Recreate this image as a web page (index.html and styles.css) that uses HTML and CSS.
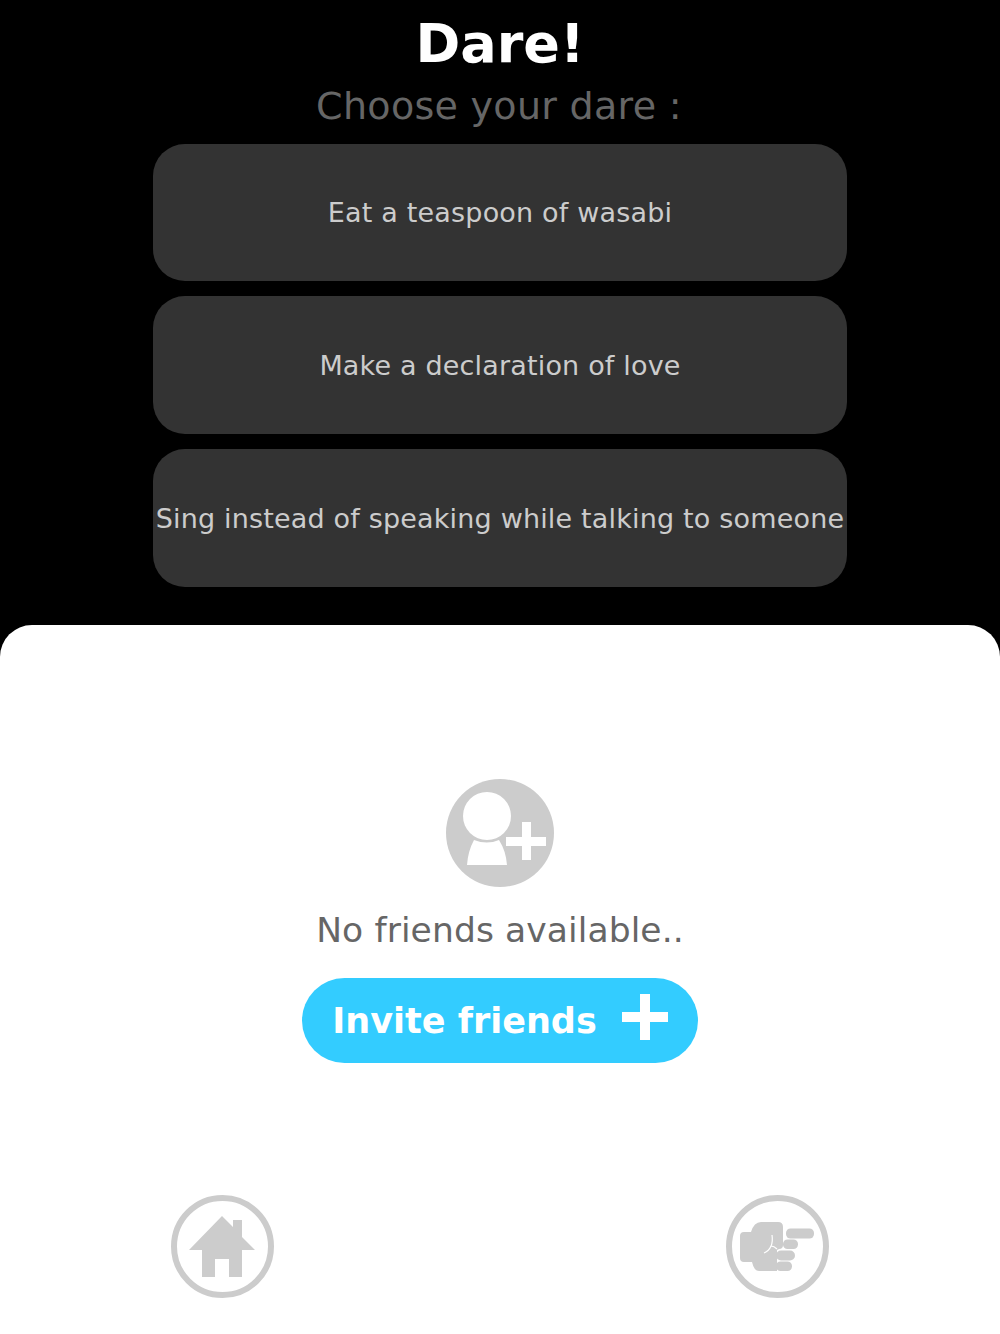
FILE: index.html
```html
<!DOCTYPE html>
<html lang="en">
<head>
<meta charset="UTF-8">
<meta name="viewport" content="width=device-width, initial-scale=1.0">
<title>Dare!</title>
<link rel="stylesheet" href="styles.css">
</head>
<body>

<section class="top">
    <h1>Dare!</h1>
    <p class="subtitle">Choose your dare :</p>
    <ul class="dares">
        <li>Eat a teaspoon of wasabi</li>
        <li>Make a declaration of love</li>
        <li>Sing instead of speaking while talking to someone</li>
    </ul>
</section>

<section class="sheet">
    <div class="friends">
        <svg class="add-icon" viewBox="0 0 108 108">
            <circle cx="54" cy="54" r="54" fill="#cccccc"/>
            <circle cx="41" cy="37" r="24" fill="#fff"/>
            <path d="M28 61 Q41 66 53 61 Q60 72 61 86 H21 Q22 72 28 61 Z" fill="#fff"/>
            <path d="M60 58 H76 V43 H85 V58 H100 V67 H85 V81 H76 V67 H60 Z" fill="#fff"/>
        </svg>
        <p class="empty">No friends available..</p>
        <button class="invite">
            <span>Invite friends</span>
            <svg class="plus" viewBox="0 0 46 46"><path d="M0 18 H18 V0 H28 V18 H46 V28 H28 V46 H18 V28 H0 Z" fill="#fff"/></svg>
        </button>
    </div>
    <nav class="bottom-nav">
        <a class="nav-btn" href="#">
            <svg viewBox="1 1 91 91">
                <path d="M46 16 L57 27 V20 H66 V37 L79 50 H66 V77 H53 V59 H39 V77 H26 V50 H13 Z" fill="#cccccc"/>
            </svg>
        </a>
        <a class="nav-btn" href="#">
            <svg viewBox="1 1 91 91">
                <!-- fist -->
                <path d="M9 36 Q9 32 13 32 H20 Q23 22 30 22 H47 Q52 22 52 27 V45 Q52 49 48 49 L46 50 V71 H28 Q23 71 21 62 H13 Q9 62 9 58 Z" fill="#cccccc"/>
                <!-- fingers -->
                <rect x="55" y="28.5" width="28" height="10" rx="4.5" fill="#cccccc"/>
                <rect x="52" y="39.5" width="15" height="9.5" rx="4.5" fill="#cccccc"/>
                <rect x="45" y="50.5" width="19" height="10" rx="5" fill="#cccccc"/>
                <rect x="45" y="61.5" width="16" height="9.5" rx="4.5" fill="#cccccc"/>
                <!-- thumb line -->
                <path d="M41 35 Q42 42 40 46 Q38 51 33 53 M40 46 Q43 46 46 49" fill="none" stroke="#fff" stroke-width="1.2"/>
            </svg>
        </a>
    </nav>
</section>

</body>
</html>
```

FILE: styles.css
```css
/* page */
* {
    box-sizing: border-box;
}
html, body {
    height: 100%;
}
body {
    margin: 0;
    background-color: #000;
    font-family: "DejaVu Sans", Verdana, sans-serif;
    display: flex;
    flex-direction: column;
    min-height: 1334px;
}

/* dark part */
.top {
    height: 625px;
    padding-top: 12px;
    display: flex;
    flex-direction: column;
    align-items: center;
}
h1 {
    margin: 0;
    color: #fff;
    font-size: 54px;
    line-height: 64px;
    font-weight: bold;
}
.subtitle {
    margin: 0;
    padding-right: 2px;
    color: #666;
    font-size: 38px;
    letter-spacing: 0.3px;
    line-height: 60px;
    height: 68px;
}
.dares {
    list-style-type: none;
    margin: 0;
    padding: 0;
    width: 694px;
    display: flex;
    flex-direction: column;
    gap: 15px;
}
.dares li {
    height: 138px;
    background-color: #333;
    border-radius: 32px;
    color: #ccc;
    font-size: 27px;
    letter-spacing: 0.175px;
    display: flex;
    align-items: center;
    justify-content: center;
    white-space: nowrap;
}
.dares li:first-child {
    height: 137px;
}

/* white sheet */
.sheet {
    flex: 1;
    background-color: #fff;
    border-radius: 32px 32px 0 0;
    padding-top: 154px;
    display: flex;
    flex-direction: column;
    align-items: center;
}
.friends {
    display: flex;
    flex-direction: column;
    align-items: center;
}
.add-icon {
    width: 108px;
    height: 108px;
    display: block;
}
.empty {
    margin: 22px 0 27px;
    color: #666;
    font-size: 34.5px;
    letter-spacing: 0.1px;
    line-height: 42px;
}
.invite {
    width: 396px;
    height: 85px;
    border: none;
    border-radius: 43px;
    background-color: #33ccff;
    color: #fff;
    font-family: inherit;
    font-size: 35px;
    font-weight: bold;
    display: flex;
    align-items: center;
    justify-content: center;
    gap: 25px;
    padding: 0;
}
.plus {
    width: 46px;
    height: 46px;
    margin-top: -8px;
}

/* bottom buttons */
.bottom-nav {
    width: 658px;
    margin-top: 132px;
    display: flex;
    justify-content: space-between;
}
.nav-btn {
    width: 103px;
    height: 103px;
    border: 6px solid #ccc;
    border-radius: 50%;
    display: block;
}
.nav-btn svg {
    width: 91px;
    height: 91px;
    display: block;
}
```
